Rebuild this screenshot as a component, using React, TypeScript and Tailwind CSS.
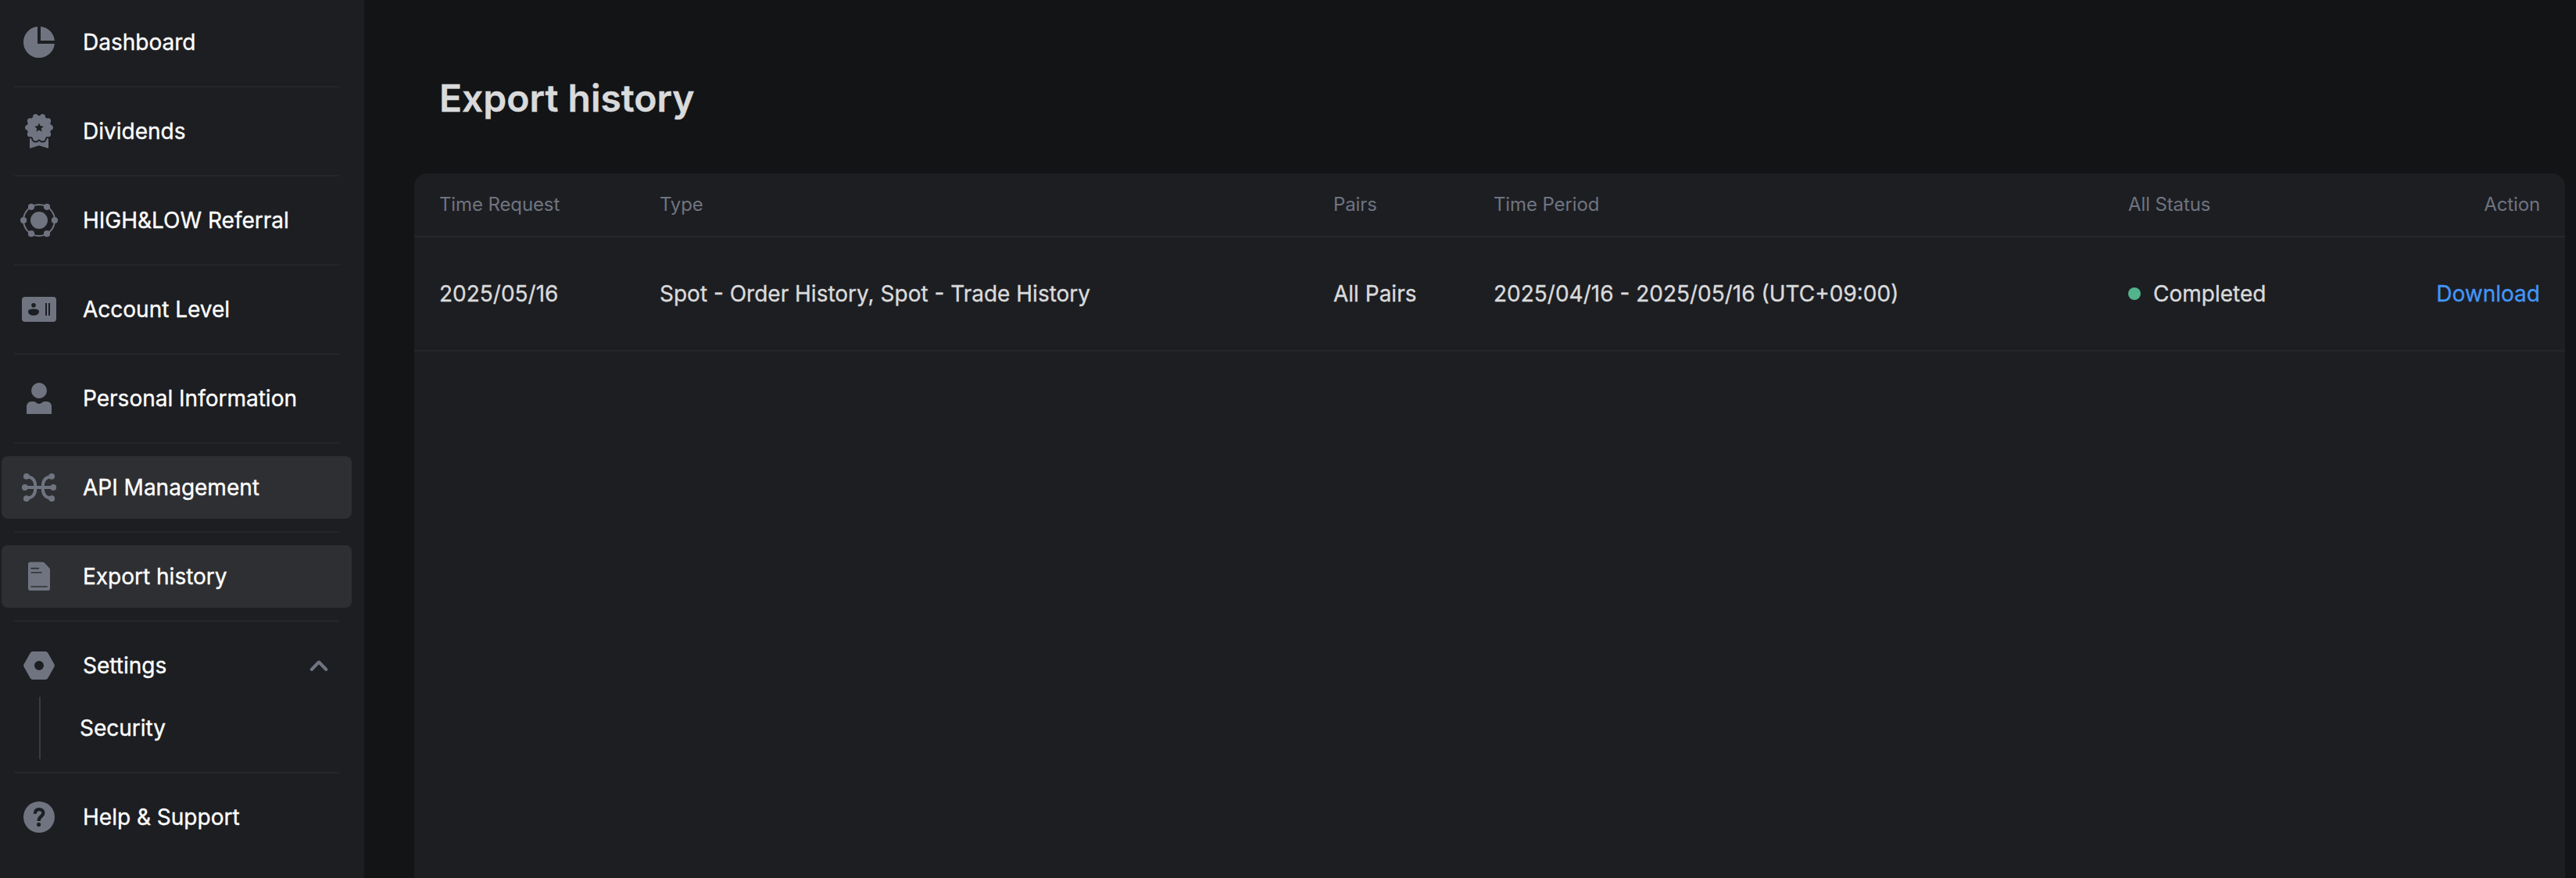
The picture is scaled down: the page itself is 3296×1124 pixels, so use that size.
import type { ReactNode } from "react";

const petals = Array.from({ length: 10 }, (_, i) => {
  const a = ((18 + i * 36) * Math.PI) / 180;
  return { cx: 12 + 7.2 * Math.sin(a), cy: 9.65 - 7.2 * Math.cos(a) };
});

function Glyph({ children }: { children: ReactNode }) {
  return (
    <svg viewBox="0 0 24 24" className="size-12 shrink-0 text-[#6f7480]" fill="currentColor">
      {children}
    </svg>
  );
}

const DashboardIcon = () => (
  <Glyph>
    <path d="M11 2.05A10 10 0 1 0 21.95 13H11Z" />
    <path d="M13 2.05A10 10 0 0 1 21.95 11H13Z" />
  </Glyph>
);

const DividendsIcon = () => (
  <Glyph>
    <path d="M6 16H18V23L12 21.1L6 23Z" />
    <g stroke="#1d1e22" strokeWidth="2">
      {petals.map((p, i) => (
        <circle key={i} cx={p.cx} cy={p.cy} r="1.75" />
      ))}
    </g>
    {petals.map((p, i) => (
      <circle key={i} cx={p.cx} cy={p.cy} r="1.75" />
    ))}
    <circle cx="12" cy="9.65" r="7.7" />
    <path
      fill="#1d1e22"
      d="M12 6.7L12.85 8.65L14.9 8.85L13.35 10.2L13.8 12.3L12 11.2L10.2 12.3L10.65 10.2L9.1 8.85L11.15 8.65Z"
    />
  </Glyph>
);

const ReferralIcon = () => (
  <Glyph>
    <circle cx="12" cy="12" r="10" fill="none" stroke="currentColor" strokeWidth="1" />
    <circle cx="12" cy="12" r="5.5" />
    <circle cx="7" cy="3.4" r="2.05" />
    <circle cx="17" cy="3.4" r="2.05" />
    <circle cx="2.05" cy="12" r="2.05" />
    <circle cx="21.95" cy="12" r="2.05" />
    <circle cx="7" cy="20.6" r="2.05" />
    <circle cx="17" cy="20.6" r="2.05" />
  </Glyph>
);

const AccountIcon = () => (
  <Glyph>
    <rect x="1" y="4" width="22" height="16" rx="2" />
    <g fill="#1d1e22">
      <circle cx="8.5" cy="9.4" r="1.4" />
      <path d="M5 13.4C5 12.2 6.4 11.7 8.5 11.7S12 12.2 12 13.4C12 15 10.4 16 8.5 16S5 15 5 13.4Z" />
      <path d="M16 8H17V16H16ZM18 8H19V16H18Z" />
    </g>
  </Glyph>
);

const PersonIcon = () => (
  <Glyph>
    <circle cx="12" cy="7" r="5" />
    <path d="M4 22V17A3 3 0 0 1 7 14H8.6C9.9 14 10.4 15.5 12 15.5S14.1 14 15.4 14H17A3 3 0 0 1 20 17V22Z" />
  </Glyph>
);

const ApiIcon = () => (
  <Glyph>
    <path
      fill="none"
      stroke="currentColor"
      strokeWidth="2"
      d="M3 12H21M3.9 4.9L6.2 5.5C8.6 6.2 9.7 9 9.7 12S8.6 17.8 6.2 18.5L3.9 19.1M20.1 4.9L17.8 5.5C15.4 6.2 14.3 9 14.3 12S15.4 17.8 17.8 18.5L20.1 19.1"
    />
    <circle cx="3.9" cy="4.9" r="1.95" />
    <circle cx="20.1" cy="4.9" r="1.95" />
    <circle cx="2.9" cy="12" r="1.95" />
    <circle cx="21.1" cy="12" r="1.95" />
    <circle cx="3.9" cy="19.1" r="1.95" />
    <circle cx="20.1" cy="19.1" r="1.95" />
  </Glyph>
);

const DocumentIcon = () => (
  <Glyph>
    <path d="M6.4 2.7H14.3Q14.9 2.7 15.3 3.1L18.6 6.6Q19 7 19 7.6V19.6A1.4 1.4 0 0 1 17.6 21H6.4A1.4 1.4 0 0 1 5 19.6V4.1A1.4 1.4 0 0 1 6.4 2.7Z" />
    <path
      fill="none"
      stroke="#2e2f33"
      strokeWidth="0.8"
      strokeLinecap="round"
      d="M7 6.8H11.7M7 9.5H13.4M7 18.5H17.1"
    />
  </Glyph>
);

const SettingsIcon = () => (
  <Glyph>
    <path
      fillRule="evenodd"
      d="M7.9 3H16.1Q17.1 3 17.6 3.9L21.7 11.1Q22.2 12 21.7 12.9L17.6 20.1Q17.1 21 16.1 21H7.9Q6.9 21 6.4 20.1L2.3 12.9Q1.8 12 2.3 11.1L6.4 3.9Q6.9 3 7.9 3ZM12 9A3 3 0 1 0 12 15A3 3 0 1 0 12 9Z"
    />
  </Glyph>
);

const HelpIcon = () => (
  <Glyph>
    <circle cx="12" cy="12" r="10" />
    <path
      fill="none"
      stroke="#1d1e22"
      strokeWidth="2.1"
      d="M9.4 9.9C9.4 8 10.4 7.1 12 7.1S14.7 8 14.7 9.4C14.7 11.5 11.8 11.5 11.8 14.5"
    />
    <circle cx="11.8" cy="16.8" r="1.3" fill="#1d1e22" />
  </Glyph>
);

function Item({ icon, label, active, children }: { icon: ReactNode; label: string; active?: boolean; children?: ReactNode }) {
  return (
    <div className={`ml-0.5 flex h-20 w-[448px] items-center rounded-lg pr-[30px] pl-6 ${active ? "bg-[#2e2f33]" : ""}`}>
      {icon}
      <span className="ml-8 flex-1">{label}</span>
      {children}
    </div>
  );
}

const Divider = () => <div className="my-4 ml-[18px] h-0.5 w-[416px] bg-[#25262a]" />;

function Sidebar() {
  return (
    <nav className="h-full w-[466px] shrink-0 bg-[#1d1e22] pt-3.5 text-[28px] leading-10 text-white [-webkit-text-stroke:0.35px_#fff]">
      <Item icon={<DashboardIcon />} label="Dashboard" />
      <Divider />
      <Item icon={<DividendsIcon />} label="Dividends" />
      <Divider />
      <Item icon={<ReferralIcon />} label="HIGH&LOW Referral" />
      <Divider />
      <Item icon={<AccountIcon />} label="Account Level" />
      <Divider />
      <Item icon={<PersonIcon />} label="Personal Information" />
      <Divider />
      <Item icon={<ApiIcon />} label="API Management" active />
      <Divider />
      <Item icon={<DocumentIcon />} label="Export history" active />
      <Divider />
      <Item icon={<SettingsIcon />} label="Settings">
        <svg viewBox="0 0 24 24" className="size-6 text-[#6f7480]" fill="none" stroke="currentColor" strokeWidth="4" strokeLinecap="round" strokeLinejoin="round">
          <path d="M2.8 17L12 7.5L21.2 17" />
        </svg>
      </Item>
      <div className="ml-[50px] flex h-20 items-center border-l-2 border-[#3a3b3f] pl-[50px]">Security</div>
      <Divider />
      <Item icon={<HelpIcon />} label="Help & Support" />
    </nav>
  );
}

export default function App() {
  return (
    <div className="flex h-[1124px] w-[3296px] overflow-hidden bg-[#131416] font-['Inter',sans-serif]">
      <Sidebar />
      <main className="flex flex-1 flex-col pr-3.5 pl-16">
        <h1 className="mt-24 ml-8 h-[126px] text-[48px] leading-[60px] font-semibold text-[#d9dadb] [-webkit-text-stroke:0.4px_#d9dadb]">
          Export history
        </h1>
        <section className="flex-1 rounded-t-2xl bg-[#1d1e22]">
          <div className="grid h-[82px] grid-cols-[282px_862px_205px_812px_1fr] items-center border-b-2 border-[#25262a] px-8 text-2xl tracking-[-0.12px] text-[#6f7480]">
            <span>Time Request</span>
            <span>Type</span>
            <span>Pairs</span>
            <span>Time Period</span>
            <span className="flex justify-between">
              <span>All Status</span>
              <span>Action</span>
            </span>
          </div>
          <div className="grid h-[146px] grid-cols-[282px_862px_205px_812px_1fr] items-center border-b-2 border-[#25262a] px-8 text-[28px] text-[#d9dadb] [-webkit-text-stroke:0.35px_currentColor]">
            <span>2025/05/16</span>
            <span>Spot - Order History, Spot - Trade History</span>
            <span>All Pairs</span>
            <span>2025/04/16 - 2025/05/16 (UTC+09:00)</span>
            <span className="flex items-center">
              <span className="mr-4 size-4 rounded-full bg-[#52b38c]" />
              <span className="flex-1">Completed</span>
              <span className="text-[#4396f7] [-webkit-text-stroke:0.35px_#4396f7]">Download</span>
            </span>
          </div>
        </section>
      </main>
    </div>
  );
}
